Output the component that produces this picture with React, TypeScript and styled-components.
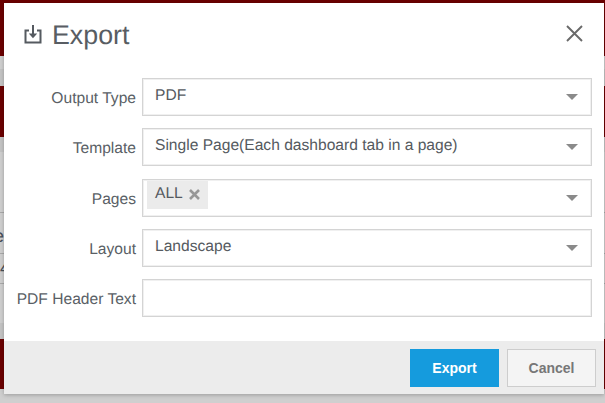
import React from "react";
import styled, { createGlobalStyle } from "styled-components";

const GlobalStyle = createGlobalStyle`
  html, body {
    margin: 0;
    padding: 0;
    width: 605px;
    height: 403px;
    overflow: hidden;
    background: #d6d6d6;
    font-family: "Liberation Sans", Arial, sans-serif;
    text-rendering: geometricPrecision;
  }
`;

const Page = styled.div`
  position: relative;
  width: 605px;
  height: 403px;
  overflow: hidden;
`;

const Backdrop = styled.div`
  display: flex;
  flex-direction: column;
  height: 100%;
`;

const tones: Record<string, string> = {
  red: "#6b0000",
  light: "#cfcfcf",
  mid: "#c4c4c4",
  line: "#a9a9a9",
};

const Band = styled.div<{ $h: number; $tone: string; $indent?: number }>`
  flex: none;
  height: ${(p) => p.$h}px;
  background: ${(p) => tones[p.$tone]};
  color: #4a5058;
  font-size: 18px;
  line-height: ${(p) => p.$h}px;
  text-indent: ${(p) => p.$indent ?? 0}px;
  overflow: hidden;
`;

const Modal = styled.div`
  position: absolute;
  left: 4px;
  top: 3px;
  width: 600px;
  height: 391px;
  display: flex;
  flex-direction: column;
  background: #fff;
  box-shadow: 0 1px 4px rgba(0, 0, 0, 0.25);
`;

const Header = styled.div`
  flex: none;
  height: 75px;
  box-sizing: border-box;
  display: flex;
  align-items: flex-start;
  padding: 16px 21px 0 20px;
  color: #555;
`;

const Title = styled.h1`
  margin: 0 0 0 10px;
  font-size: 26.8px;
  line-height: 32px;
  font-weight: 400;
  color: #585d63;
`;

const ExportIcon = styled.svg`
  margin-top: 6px;
  flex: none;
`;

const CloseButton = styled.button`
  margin-left: auto;
  margin-top: 6px;
  padding: 0;
  border: 0;
  background: none;
  display: flex;
  color: #6a6a6a;
`;

const Form = styled.div`
  flex: 1;
  display: flex;
  flex-direction: column;
  gap: 12.25px;
`;

const Row = styled.div`
  display: grid;
  grid-template-columns: 132px 450px;
  column-gap: 6px;
  height: 38px;
`;

const Label = styled.label`
  text-align: right;
  font-size: 15.6px;
  line-height: 42px;
  color: #5a5f66;
`;

const Field = styled.div`
  box-sizing: border-box;
  height: 38px;
  display: flex;
  align-items: center;
  border: 1px solid #d4d4d4;
  box-shadow: inset 0 0 0 1px #f0f0f0;
  padding: 0 13px 0 12px;
  font-size: 15.6px;
  color: #555a60;
`;

const Value = styled.span`
  flex: 1;
  position: relative;
  top: -1px;
`;

const Caret = styled.span`
  flex: none;
  width: 0;
  height: 0;
  border-left: 6.5px solid transparent;
  border-right: 6.5px solid transparent;
  border-top: 6.5px solid #8a8a8a;
`;

const TagList = styled.div`
  flex: 1;
  align-self: flex-start;
  display: flex;
  margin: 1px 0 0 -8px;
`;

const Tag = styled.span`
  display: flex;
  align-items: center;
  gap: 6px;
  height: 28px;
  padding: 0 8px 1px 8px;
  box-sizing: border-box;
  background: #ebebeb;
`;

const TagClose = styled.svg`
  display: block;
  color: #979797;
`;

const Footer = styled.div`
  flex: none;
  height: 53px;
  box-sizing: border-box;
  display: flex;
  justify-content: flex-end;
  align-items: flex-start;
  gap: 8px;
  padding: 8px 8px 0 0;
  background: #ececec;
`;

const Button = styled.button<{ $primary?: boolean }>`
  width: 89px;
  height: 38px;
  padding: 0;
  box-sizing: border-box;
  font-family: inherit;
  font-size: 14px;
  font-weight: 700;
  border: ${(p) => (p.$primary ? "0" : "1px solid #cdcdcd")};
  background: ${(p) => (p.$primary ? "#159bdd" : "#f4f4f4")};
  color: ${(p) => (p.$primary ? "#fff" : "#777")};
`;

const bands: [number, string, string?, number?][] = [
  [56, "red"],
  [13, "light"],
  [17, "mid"],
  [51, "red"],
  [15, "mid"],
  [60, "light"],
  [1, "line"],
  [14, "light"],
  [18, "light", "e", -6],
  [8, "light"],
  [1, "line"],
  [5, "light"],
  [18, "light", "4", 0],
  [6, "light"],
  [1, "line"],
  [39, "light"],
  [16, "mid"],
  [50, "red"],
  [14, "light"],
];

const rows = [
  { label: "Output Type", value: "PDF" },
  { label: "Template", value: "Single Page(Each dashboard tab in a page)" },
  { label: "Pages", tag: "ALL" },
  { label: "Layout", value: "Landscape" },
];

export default function App() {
  return (
    <Page>
      <GlobalStyle />
      <Backdrop>
        {bands.map(([h, tone, text, indent], i) => (
          <Band key={i} $h={h} $tone={tone} $indent={indent}>
            {text}
          </Band>
        ))}
      </Backdrop>
      <Modal>
        <Header>
          <ExportIcon width="18" height="19" viewBox="0 0 18 19" fill="none" stroke="#555a60" strokeWidth="2">
            <path d="M5 5.5H1.5V17.5H16.5V5.5H13" />
            <path d="M9 0V11" />
            <path d="M4.8 8.5H13.2L9 13.2Z" fill="#555a60" strokeWidth="0" />
          </ExportIcon>
          <Title>Export</Title>
          <CloseButton aria-label="Close">
            <svg width="17" height="17" viewBox="0 0 17 17" fill="none" stroke="currentColor" strokeWidth="1.9">
              <path d="M1 1L16 16M16 1L1 16" />
            </svg>
          </CloseButton>
        </Header>
        <Form>
          {rows.map((r) => (
            <Row key={r.label}>
              <Label>{r.label}</Label>
              <Field>
                {r.tag ? (
                  <TagList>
                    <Tag>
                      {r.tag}
                      <TagClose width="11" height="11" viewBox="0 0 11 11" fill="none" stroke="currentColor" strokeWidth="2.6">
                        <path d="M1 1L10 10M10 1L1 10" />
                      </TagClose>
                    </Tag>
                  </TagList>
                ) : (
                  <Value>{r.value}</Value>
                )}
                <Caret />
              </Field>
            </Row>
          ))}
          <Row>
            <Label>PDF Header Text</Label>
            <Field />
          </Row>
        </Form>
        <Footer>
          <Button $primary>Export</Button>
          <Button>Cancel</Button>
        </Footer>
      </Modal>
    </Page>
  );
}
